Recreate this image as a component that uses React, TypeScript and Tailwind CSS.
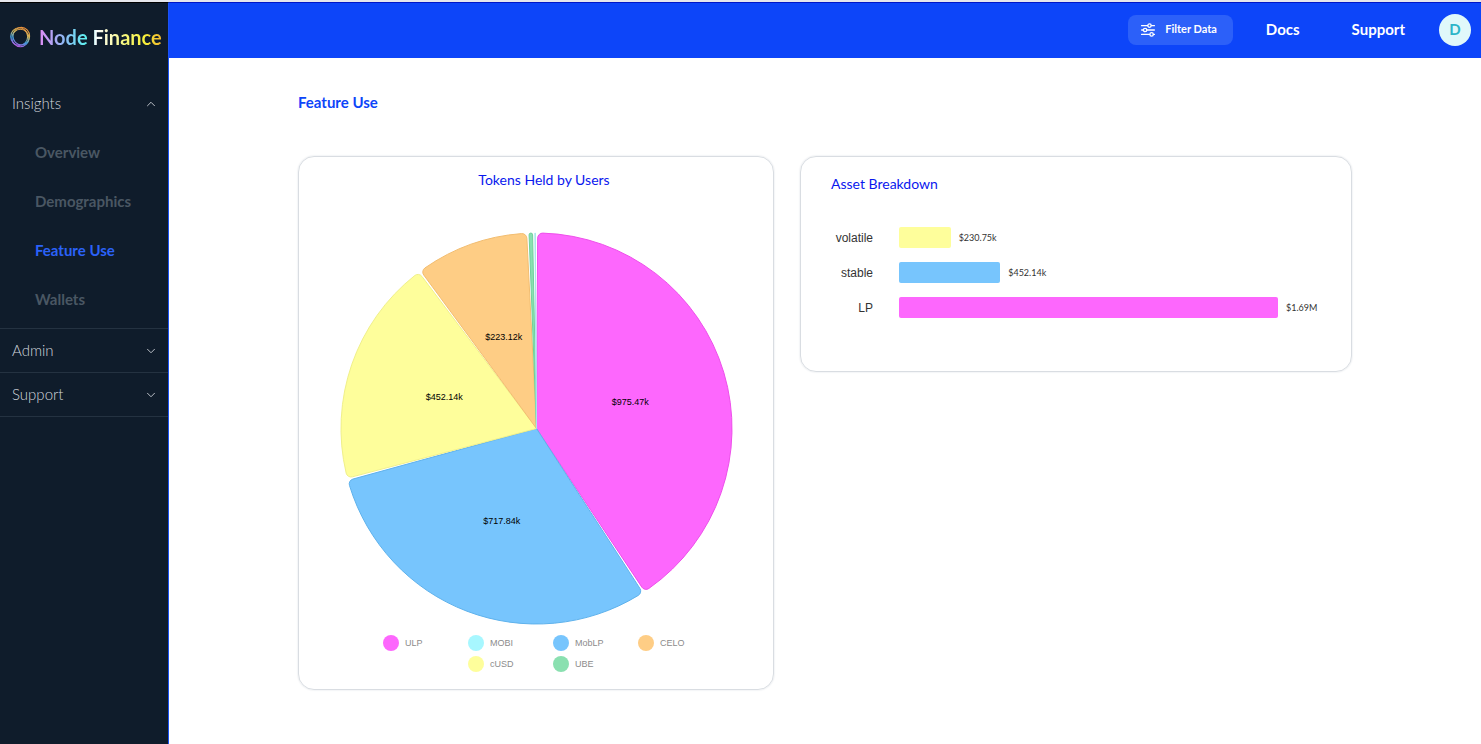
import { ChevronDown, ChevronUp } from "lucide-react";

const links = [
  { name: "Overview", active: false },
  { name: "Demographics", active: false },
  { name: "Feature Use", active: true },
  { name: "Wallets", active: false },
];

const tokens = [
  { name: "ULP", value: 975.47, label: "$975.47k", fill: "#fd67fd", stroke: "#ee4fea" },
  { name: "MobLP", value: 717.84, label: "$717.84k", fill: "#77c5fd", stroke: "#5fb2ec" },
  { name: "cUSD", value: 452.14, label: "$452.14k", fill: "#fefe9b", stroke: "#f0f08a" },
  { name: "CELO", value: 223.12, label: "$223.12k", fill: "#fecd85", stroke: "#f2bd70" },
  { name: "UBE", value: 6.93, label: "", fill: "#8ae0b0", stroke: "#6fd09c" },
  { name: "MOBI", value: 0.7, label: "", fill: "#a7f7ff", stroke: "#a5e6ec" },
];

const legend = [
  { name: "ULP", color: "bg-[#fd67fd]" },
  { name: "MOBI", color: "bg-[#a7f7ff]" },
  { name: "MobLP", color: "bg-[#77c5fd]" },
  { name: "CELO", color: "bg-[#fecd85]" },
  { name: "cUSD", color: "bg-[#fefe9b]" },
  { name: "UBE", color: "bg-[#8ae0b0]" },
];

const assets = [
  { name: "volatile", value: 230.75, label: "$230.75k", color: "bg-[#fefe9b]" },
  { name: "stable", value: 452.14, label: "$452.14k", color: "bg-[#77c5fd]" },
  { name: "LP", value: 1693.31, label: "$1.69M", color: "bg-[#fd67fd]" },
];

const RADIUS = 195.5;
const CENTER = 196.5;
const PAD = (0.7 * Math.PI) / 180;

const point = (r: number, a: number) =>
  `${(CENTER + r * Math.sin(a)).toFixed(2)} ${(CENTER - r * Math.cos(a)).toFixed(2)}`;

// wedge with rounded outer corners
const slicePath = (start: number, end: number) => {
  const s = Math.sin(Math.min((end - start) / 2, Math.PI / 2));
  const rc = Math.min(5, (RADIUS * s) / (1 + s));
  const off = Math.asin(rc / (RADIUS - rc));
  const edge = Math.sqrt((RADIUS - rc) ** 2 - rc ** 2);
  const large = end - start - 2 * off > Math.PI ? 1 : 0;
  return [
    `M${CENTER} ${CENTER}`,
    `L${point(edge, start)}`,
    `A${rc} ${rc} 0 0 1 ${point(RADIUS, start + off)}`,
    `A${RADIUS} ${RADIUS} 0 ${large} 1 ${point(RADIUS, end - off)}`,
    `A${rc} ${rc} 0 0 1 ${point(edge, end)}`,
    "Z",
  ].join("");
};

const getSlices = () => {
  const total = tokens.reduce((sum, t) => sum + t.value, 0);
  const k = (2 * Math.PI - tokens.length * PAD) / total;
  let angle = 0;
  return tokens.map((t) => {
    const start = angle;
    angle += t.value * k + PAD;
    const mid = (start + angle) / 2;
    return {
      ...t,
      d: slicePath(start + PAD / 2, angle - PAD / 2),
      x: CENTER + (RADIUS / 2) * Math.sin(mid),
      y: CENTER - (RADIUS / 2) * Math.cos(mid),
    };
  });
};

const Logo = () => (
  <svg viewBox="0 0 22 22" className="w-[22px] h-[22px] shrink-0" fill="none" stroke="url(#ring)" strokeWidth="1.1">
    <defs>
      <linearGradient id="ring" gradientUnits="userSpaceOnUse" x1="15" y1="1" x2="7" y2="21">
        <stop offset="0" stopColor="#ee8a35" />
        <stop offset="0.35" stopColor="#d3b75c" />
        <stop offset="0.65" stopColor="#3f9fe0" />
        <stop offset="1" stopColor="#c94fe0" />
      </linearGradient>
    </defs>
    <ellipse cx="12.3" cy="10.2" rx="8.3" ry="8.8" />
    <ellipse cx="10.2" cy="10.6" rx="8.5" ry="8.8" />
    <ellipse cx="11.4" cy="12" rx="8.5" ry="8.8" />
  </svg>
);

const FilterIcon = () => (
  <svg viewBox="0 0 14 14" className="w-3.5 h-3.5" fill="none" stroke="white" strokeWidth="1.3" strokeLinecap="round">
    <path d="M0.6 2.6H6.6M10.4 2.6H13.4M0.6 7H2.2M6 7H13.4M0.6 11.4H8.6M12.4 11.4H13.4" />
    <circle cx="8.5" cy="2.6" r="1.7" />
    <circle cx="4.1" cy="7" r="1.7" />
    <circle cx="10.6" cy="11.4" r="1.7" />
  </svg>
);

const Sidebar = () => {
  return (
    <aside className="w-[169px] shrink-0 bg-[#0f1c2b] border-r border-[#1a52f5] border-t border-t-black">
      <a href="#" className="flex items-center gap-2 pl-[9px] pt-[22px]">
        <Logo />
        <span className="text-[20px] leading-6 font-bold whitespace-nowrap text-transparent bg-clip-text bg-[linear-gradient(90deg,#e08cf5_0%,#8fb8f5_20%,#5ff0f0_38%,#ffffff_47%,#f7f77a_70%,#f7f03a_86%,#f0b52e_100%)]">
          Node Finance
        </span>
      </a>
      <nav className="pt-[30px] text-[15px] text-gray-300">
        <button className="flex w-full h-[49px] items-center justify-between pl-3 pr-2.5 text-left font-light">
          Insights
          <ChevronUp size={14} strokeWidth={1.5} />
        </button>
        <ul className="border-b border-[#243241] pb-1">
          {links.map((link) => (
            <li key={link.name}>
              <a
                href="#"
                className={`flex h-[49px] items-center pl-[35px] font-bold ${link.active ? "text-[#2b62f8]" : "text-[#4a5763]"}`}
              >
                {link.name}
              </a>
            </li>
          ))}
        </ul>
        {["Admin", "Support"].map((name) => (
          <button
            key={name}
            className="flex w-full h-11 items-center justify-between border-b border-[#243241] pl-3 pr-2.5 text-left font-light"
          >
            {name}
            <ChevronDown size={14} strokeWidth={1.5} />
          </button>
        ))}
      </nav>
    </aside>
  );
};

const Header = () => {
  return (
    <header className="flex h-14 items-center justify-end bg-[#0d45f9] border-t border-[#0016c8] pb-0.5 pr-2.5 text-[15px] font-bold text-white">
      <button className="flex h-[30px] items-center gap-2.5 rounded-lg bg-[#2c60f9] pl-[13px] pr-4 text-[11px]">
        <FilterIcon />
        Filter Data
      </button>
      <a href="#" className="ml-[33px]">Docs</a>
      <a href="#" className="ml-[52px]">Support</a>
      <button className="ml-[34px] h-8 w-8 rounded-full bg-[#e0f8fa] text-[#2cb5c8]">D</button>
    </header>
  );
};

const TokensHeld = () => {
  return (
    <section className="rounded-2xl border border-[#d9dde2] pt-[13px] pb-[17px] shadow-[0_0_2px_#d9dde2]">
      <h2 className="pl-4 text-center text-sm leading-5 text-[#0a18ee]">Tokens Held by Users</h2>
      <svg viewBox="0 0 393 393" className="mx-auto mt-[42px] w-[393px] max-w-full">
        {getSlices().map((s) => (
          <g key={s.name}>
            <path d={s.d} fill={s.fill} stroke={s.stroke} />
            <text
              x={s.x}
              y={s.y + 1}
              textAnchor="middle"
              dominantBaseline="central"
              className="fill-black text-[9px] font-['Liberation_Sans',sans-serif]"
            >
              {s.label}
            </text>
          </g>
        ))}
      </svg>
      <div className="mt-2.5 flex justify-center pl-[34px]">
        <ul className="grid grid-cols-[repeat(4,85px)] gap-y-[5px] font-['Liberation_Sans',sans-serif] text-[9px] leading-4 text-[#8c8c8c]">
          {legend.map((item) => (
            <li key={item.name} className={`flex items-center gap-1.5 ${item.name === "cUSD" ? "col-start-2" : ""}`}>
              <span className={`h-4 w-4 rounded-full ${item.color}`}></span>
              {item.name}
            </li>
          ))}
        </ul>
      </div>
    </section>
  );
};

const AssetBreakdown = () => {
  const max = Math.max(...assets.map((a) => a.value));
  return (
    <section className="rounded-2xl border border-[#d9dde2] pt-[17px] pb-[53px] shadow-[0_0_2px_#d9dde2]">
      <h2 className="pl-[30px] text-sm leading-5 text-[#0a18ee]">Asset Breakdown</h2>
      <ul className="mt-[33px] flex flex-col gap-3.5 pr-[73px]">
        {assets.map((a) => (
          <li key={a.name} className="flex items-center">
            <span className="w-[72px] text-right font-['Liberation_Sans',sans-serif] text-xs text-[#333]">{a.name}</span>
            <div className="ml-[26px] flex min-w-0 flex-1 items-center">
              <div className={`h-[21px] shrink-0 rounded-xs ${a.color}`} style={{ width: `${(a.value / max) * 100}%` }}></div>
              <span className="ml-2 text-[9px] whitespace-nowrap text-[#333]">{a.label}</span>
            </div>
          </li>
        ))}
      </ul>
    </section>
  );
};

const App = () => {
  return (
    <div className="flex min-h-screen flex-col bg-white font-['Lato',sans-serif]">
      <div className="h-0.5 bg-[#e6e6ec]"></div>
      <div className="flex flex-1">
        <Sidebar />
        <div className="min-w-0 flex-1">
          <Header />
          <main className="mx-auto max-w-[1054px] pt-[34px]">
            <h1 className="text-[15px] leading-5 font-bold text-[#0d45f9]">Feature Use</h1>
            <div className="mt-11 grid grid-cols-[476fr_552fr] items-start gap-[26px]">
              <TokensHeld />
              <AssetBreakdown />
            </div>
          </main>
        </div>
      </div>
    </div>
  );
};

export default App;
